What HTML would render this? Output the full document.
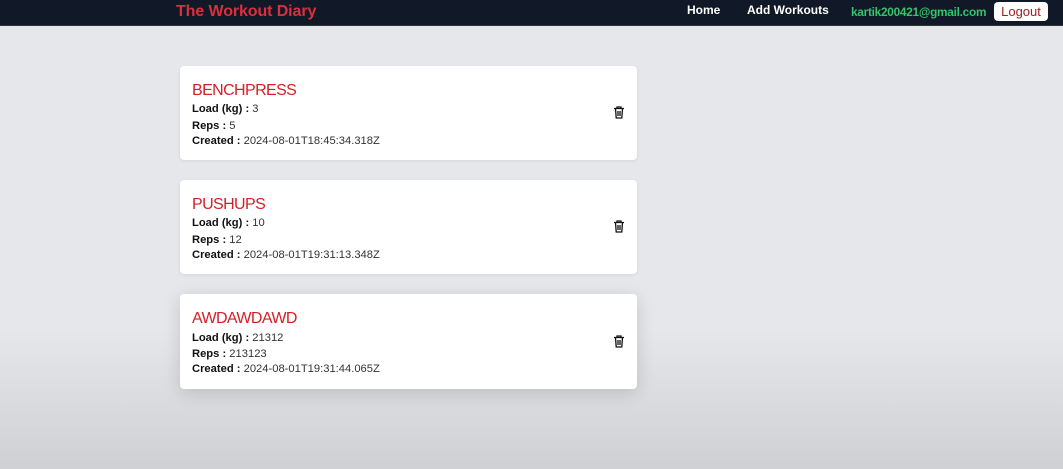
<!DOCTYPE html>
<html><head><style>
body{margin:0;width:1063px;height:469px;overflow:hidden;font-family:"Liberation Sans",sans-serif;background:linear-gradient(#e5e7eb 0,#e5e7eb 330px,#cfd0d4 469px);position:relative}
.nav{position:absolute;top:0;left:0;width:1063px;height:25px;background:#111827;border-bottom:1px solid #333}
.logo{position:absolute;left:176px;top:3px;color:#dc2f3c;font-weight:bold;font-size:16px;letter-spacing:-0.1px}
.nl{position:absolute;top:3px;color:#fff;font-weight:bold;font-size:12px}
.em{position:absolute;left:851px;top:5px;color:#34c46a;font-weight:bold;font-size:11.8px;letter-spacing:-0.25px}
.lo{position:absolute;left:994px;top:2px;width:54px;height:19px;background:#fff;border-radius:4px;color:#a51c24;font-size:13px;text-align:center;line-height:19px}
.card{position:absolute;left:180px;width:457px;background:#fff;border-radius:4px;box-shadow:0 1px 3px rgba(0,0,0,.08)}
.t{position:absolute;left:12px;top:16px;color:#d42027;font-size:16px;letter-spacing:-0.6px}
.r{position:absolute;left:12px;font-size:11.2px;color:#333}
.r b{color:#111}
.tr{position:absolute;left:433px}
</style></head><body>
<div class="nav"><div class="logo">The Workout Diary</div>
<div class="nl" style="left:687px">Home</div><div class="nl" style="left:747px">Add Workouts</div>
<div class="em">kartik200421@gmail.com</div><div class="lo">Logout</div></div>

<div class="card" style="top:66px;height:94px"><div class="t">BENCHPRESS</div>
<div class="r" style="top:37px"><b>Load (kg) :</b> 3</div><div class="r" style="top:54px"><b>Reps :</b> 5</div><div class="r" style="top:69px"><b>Created :</b> 2024-08-01T18:45:34.318Z</div>
<svg class="tr" style="top:40px" width="12" height="13" viewBox="0 0 12 13"><path d="M1 2.5h10M4 2.5V1h4v1.5M2.5 2.5l.7 9.5h5.6l.7-9.5M5 5v5M7 5v5" stroke="#111" stroke-width="1.3" fill="none"/></svg></div>

<div class="card" style="top:180px;height:94px"><div class="t">PUSHUPS</div>
<div class="r" style="top:37px"><b>Load (kg) :</b> 10</div><div class="r" style="top:54px"><b>Reps :</b> 12</div><div class="r" style="top:69px"><b>Created :</b> 2024-08-01T19:31:13.348Z</div>
<svg class="tr" style="top:40px" width="12" height="13" viewBox="0 0 12 13"><path d="M1 2.5h10M4 2.5V1h4v1.5M2.5 2.5l.7 9.5h5.6l.7-9.5M5 5v5M7 5v5" stroke="#111" stroke-width="1.3" fill="none"/></svg></div>

<div class="card" style="top:294px;height:95px;box-shadow:0 4px 18px rgba(0,0,0,.15)"><div class="t">AWDAWDAWD</div>
<div class="r" style="top:38px"><b>Load (kg) :</b> 21312</div><div class="r" style="top:54px"><b>Reps :</b> 213123</div><div class="r" style="top:69px"><b>Created :</b> 2024-08-01T19:31:44.065Z</div>
<svg class="tr" style="top:41px" width="12" height="13" viewBox="0 0 12 13"><path d="M1 2.5h10M4 2.5V1h4v1.5M2.5 2.5l.7 9.5h5.6l.7-9.5M5 5v5M7 5v5" stroke="#111" stroke-width="1.3" fill="none"/></svg></div>
</body></html>
